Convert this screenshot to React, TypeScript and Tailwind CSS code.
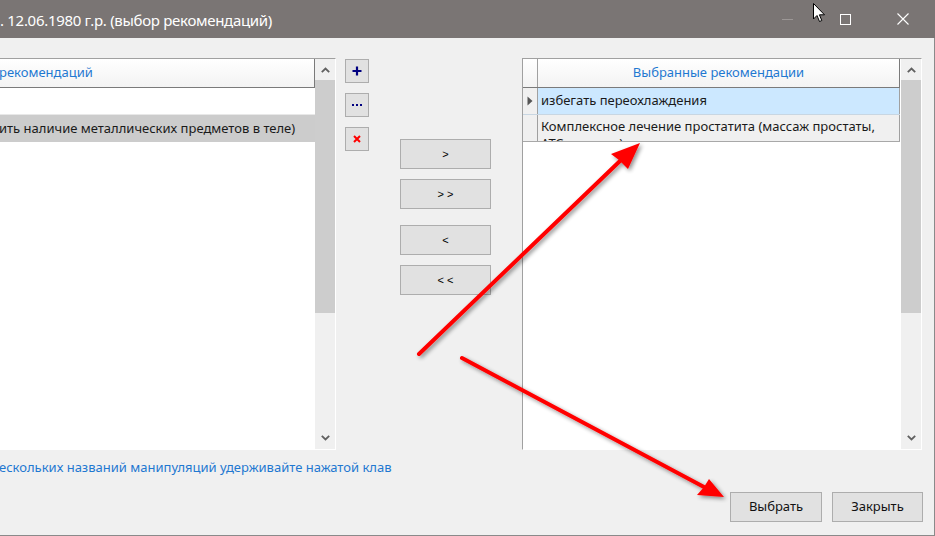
import React from "react";

const ChevUp = () => (
  <svg width="9" height="6" viewBox="0 0 9 6">
    <path d="M0.8 5.2 L4.5 1.5 L8.2 5.2" fill="none" stroke="#606060" strokeWidth="1.8" />
  </svg>
);
const ChevDown = () => (
  <svg width="9" height="6" viewBox="0 0 9 6">
    <path d="M0.8 0.8 L4.5 4.5 L8.2 0.8" fill="none" stroke="#606060" strokeWidth="1.8" />
  </svg>
);

function Scrollbar() {
  return (
    <div className="w-[20px] h-full flex flex-col bg-[#f0f0f0]">
      <div className="h-[21px] flex items-center justify-center">
        <ChevUp />
      </div>
      <div className="h-[233px] bg-[#cdcdcd]" />
      <div className="flex-1 flex items-end justify-center pb-[8px]">
        <ChevDown />
      </div>
    </div>
  );
}

function SmallBtn({ children }: { children: React.ReactNode }) {
  return (
    <div className="w-[24px] h-[24px] border border-[#adadad] bg-[#e1e1e1] flex items-center justify-center">
      {children}
    </div>
  );
}

function MoveBtn({ label, className }: { label: string; className?: string }) {
  return (
    <div
      className={
        "w-[91px] h-[30px] border border-[#adadad] bg-[#e1e1e1] flex items-center justify-center text-[11px] text-black font-['Liberation_Sans',sans-serif] " +
        (className ?? "")
      }
    >
      {label}
    </div>
  );
}

export default function App() {
  return (
    <div className="relative w-[935px] h-[536px] overflow-hidden bg-[#f0f0f0] font-['Noto_Sans',sans-serif]">
      {/* Title bar */}
      <div className="h-[38px] bg-[#7a7574] flex items-center text-white">
        <span className="ml-[0px] mt-[2px] text-[15px] tracking-[-0.3px] whitespace-nowrap">. 12.06.1980 г.р. (выбор рекомендаций)</span>
        <div className="ml-auto mr-[3px] flex h-full">
          <div className="w-[58px] h-full flex items-center justify-center">
            <div className="w-[11px] h-[1px] bg-[#9c9796]" />
          </div>
          <div className="w-[58px] h-full flex items-center justify-center">
            <div className="w-[11px] h-[11px] border border-white" />
          </div>
          <div className="w-[58px] h-full flex items-center justify-center">
            <svg width="12" height="12" viewBox="0 0 12 12">
              <path d="M0.5 0.5 L11.5 11.5 M11.5 0.5 L0.5 11.5" stroke="#fff" strokeWidth="1.1" />
            </svg>
          </div>
        </div>
      </div>

      {/* Body */}
      <div className="w-[935px] h-[498px] border-r border-b border-[#8a8a8a] flex flex-col">
        <div className="flex items-start pt-[20px]">
          {/* Left grid */}
          <div className="w-[336px] h-[392px] border-t border-[#a0a0a0] border-r border-r-white border-b border-b-white flex">
            <div className="w-[315px] h-full bg-white flex flex-col">
              <div className="h-[29px] border-b border-[#7a7a7a] border-r border-r-[#7a7a7a] bg-gradient-to-b from-white to-[#f3f3f3] flex items-center text-[13px] text-[#1f78d1]">
                <span className="ml-[-1px]">рекомендаций</span>
              </div>
              <div className="h-[27px] bg-white border-b border-[#e8e8e8]" />
              <div className="h-[27px] bg-[#cccccc] flex items-center text-[13px] text-[#1a1a1a]">
                <span className="ml-[-1px] whitespace-nowrap">ить наличие металлических предметов в теле)</span>
              </div>
            </div>
            <Scrollbar />
          </div>

          {/* small buttons */}
          <div className="ml-[9px] mt-[1px] flex flex-col gap-[10px]">
            <SmallBtn>
              <svg width="10" height="10" viewBox="0 0 10 10">
                <path d="M5 0.5 V9.5 M0.5 5 H9.5" stroke="#000080" strokeWidth="2.2" />
              </svg>
            </SmallBtn>
            <SmallBtn>
              <svg width="10" height="4" viewBox="0 0 10 4">
                <rect x="0" y="1" width="2" height="2" fill="#000080" />
                <rect x="4" y="1" width="2" height="2" fill="#000080" />
                <rect x="8" y="1" width="2" height="2" fill="#000080" />
              </svg>
            </SmallBtn>
            <SmallBtn>
              <svg width="8" height="8" viewBox="0 0 8 8">
                <path d="M1 1 L7 7 M7 1 L1 7" stroke="#ff0000" strokeWidth="2" />
              </svg>
            </SmallBtn>
          </div>

          {/* move buttons */}
          <div className="ml-[31px] mt-[81px] flex flex-col">
            <MoveBtn label=">" />
            <MoveBtn label="> >" className="mt-[10px]" />
            <MoveBtn label="<" className="mt-[16px]" />
            <MoveBtn label="< <" className="mt-[10px]" />
          </div>

          {/* Right grid */}
          <div className="ml-[31px] w-[400px] h-[392px] border-t border-l border-[#a0a0a0] border-r border-r-white border-b border-b-white flex">
            <div className="w-[377px] h-full bg-white flex flex-col">
              <div className="h-[29px] flex border-b border-[#7a7a7a]">
                <div className="w-[15px] h-full border-r border-[#a0a0a0] bg-gradient-to-b from-white to-[#f3f3f3]" />
                <div className="flex-1 h-full border-r border-[#7a7a7a] bg-gradient-to-b from-white to-[#f3f3f3] flex items-center justify-center text-[13px] text-[#1f78d1]">
                  Выбранные рекомендации
                </div>
              </div>
              <div className="h-[27px] flex border-b border-[#c8d6e2]">
                <div className="w-[15px] h-full border-r border-[#a0a0a0] bg-[#f0f0f0] flex items-center justify-center">
                  <svg width="6" height="10" viewBox="0 0 6 10">
                    <path d="M0.5 0.5 L5.5 5 L0.5 9.5 Z" fill="#555" />
                  </svg>
                </div>
                <div className="flex-1 h-full bg-[#cce8ff] border-r border-[#a0a0a0] flex items-center pl-[3px] text-[13px] text-[#1a1a1a]">
                  избегать переохлаждения
                </div>
              </div>
              <div className="h-[27px] flex border-b border-[#a8a8a8]">
                <div className="w-[15px] h-full border-r border-[#a0a0a0] bg-[#f0f0f0]" />
                <div className="flex-1 h-full bg-[#f0f0f0] border-r border-[#a0a0a0] overflow-hidden pl-[3px] pt-[3px] text-[13px] leading-[17px] text-[#1a1a1a]">
                  <div className="whitespace-nowrap">Комплексное лечение простатита (массаж простаты,</div>
                  <div className="whitespace-nowrap">АТС-терапия)</div>
                </div>
              </div>
            </div>
            <div className="w-[1px] h-full bg-white" />
            <Scrollbar />
          </div>
        </div>

        {/* status text */}
        <div className="mt-[9px] h-[17px] leading-[17px] text-[13px] text-[#1f78d1] whitespace-nowrap">
          <span className="ml-[-1px]">ескольких названий манипуляций удерживайте нажатой клав</span>
        </div>

        {/* bottom buttons */}
        <div className="mt-[16px] flex justify-end gap-[10px] pr-[11px]">
          <div className="w-[92px] h-[30px] border border-[#adadad] bg-[#e1e1e1] flex items-center justify-center text-[13px] text-[#111]">
            Выбрать
          </div>
          <div className="w-[91px] h-[30px] border border-[#adadad] bg-[#e1e1e1] flex items-center justify-center text-[13px] text-[#111]">
            Закрыть
          </div>
        </div>
      </div>

      {/* Annotation arrows */}
      <svg className="absolute inset-0 pointer-events-none" width="935" height="536" viewBox="0 0 935 536">
        <defs>
          <filter id="sh" x="-20%" y="-20%" width="140%" height="140%">
            <feGaussianBlur in="SourceAlpha" stdDeviation="2" />
            <feOffset dx="2" dy="2" result="b" />
            <feComponentTransfer>
              <feFuncA type="linear" slope="0.45" />
            </feComponentTransfer>
            <feMerge>
              <feMergeNode />
              <feMergeNode in="SourceGraphic" />
            </feMerge>
          </filter>
        </defs>
        <g filter="url(#sh)">
          <path d="M419 354 L620 161" stroke="#ff0000" strokeWidth="4" strokeLinecap="round" />
          <path d="M640 143 L611 154 L619 160 L628 169 Z" fill="#ff0000" />
          <path d="M462 358 L704 487" stroke="#ff0000" strokeWidth="4" strokeLinecap="round" />
          <path d="M724 497 L709 479 L704 487 L697 495 Z" fill="#ff0000" />
        </g>
      </svg>

      {/* Mouse cursor */}
      <svg className="absolute left-[813px] top-[3px] pointer-events-none" width="13" height="20" viewBox="0 0 13 20">
        <path d="M0.5 0.5 L0.5 16 L4 12.5 L6.5 18.5 L8.8 17.5 L6.4 11.8 L11.5 11.8 Z" fill="#fff" stroke="#000" strokeWidth="1" strokeLinejoin="round" />
      </svg>
    </div>
  );
}
